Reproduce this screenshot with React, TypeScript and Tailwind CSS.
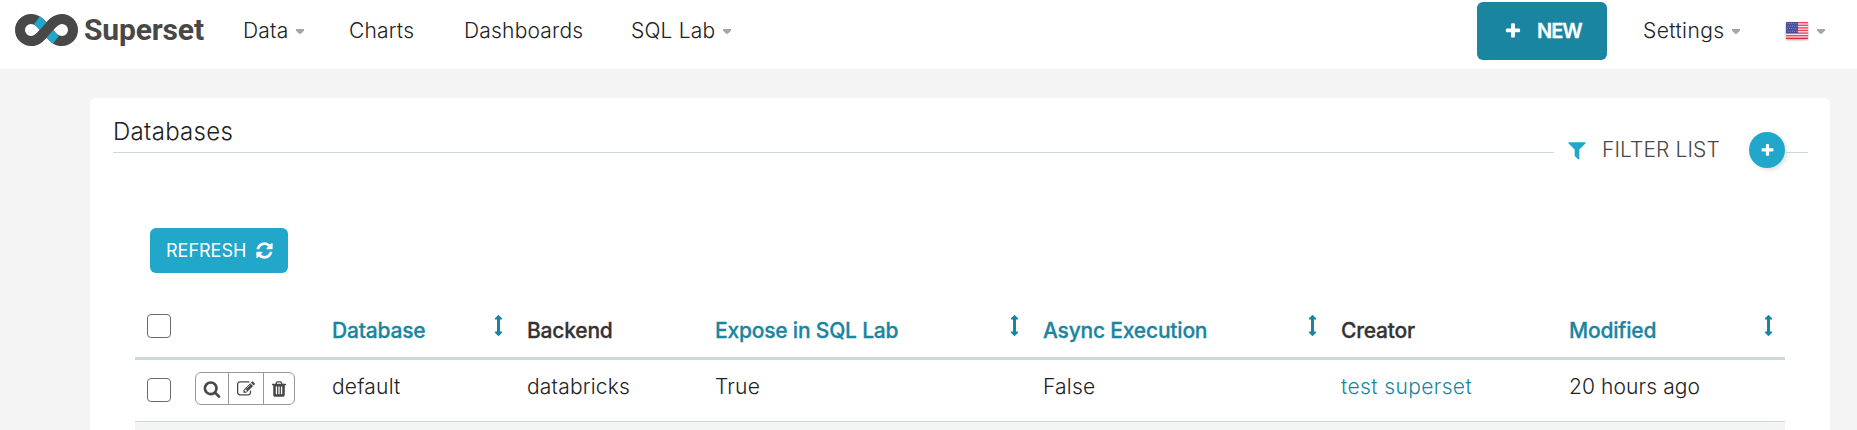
import React from "react";

const paths = {
  search:
    "M1216 832q0-185-131.5-316.5t-316.5-131.5-316.5 131.5-131.5 316.5 131.5 316.5 316.5 131.5 316.5-131.5 131.5-316.5zm512 832q0 52-38 90t-90 38q-54 0-90-38l-343-342q-179 124-399 124-143 0-273.5-55.5t-225-150-150-225-55.5-273.5 55.5-273.5 150-225 225-150 273.5-55.5 273.5 55.5 225 150 150 225 55.5 273.5q0 220-124 399l343 343q37 37 37 90z",
  refresh:
    "M1639 1056q0 5-1 7-64 268-268 434.5t-478 166.5q-146 0-282.5-55t-243.5-157l-129 129q-19 19-45 19t-45-19-19-45v-448q0-26 19-45t45-19h448q26 0 45 19t19 45-19 45l-137 137q71 66 161 102t187 36q134 0 250-65t186-179q11-17 53-117 8-23 30-23h192q13 0 22.5 9.5t9.5 22.5zm25-800v448q0 26-19 45t-45 19h-448q-26 0-45-19t-19-45 19-45l138-138q-148-137-349-137-134 0-250 65t-186 179q-11 17-53 117-8 23-30 23h-199q-13 0-22.5-9.5t-9.5-22.5v-7q65-268 270-434.5t480-166.5q146 0 284 55.5t245 156.5l130-129q19-19 45-19t45 19 19 45z",
  filter:
    "M1595 295q17 41-14 70l-493 493v742q0 42-39 59-13 5-25 5-27 0-45-19l-256-256q-19-19-19-45v-486l-493-493q-31-29-14-70 17-39 59-39h1280q42 0 59 39z",
  plus: "M1600 736v192q0 40-28 68t-68 28h-416v416q0 40-28 68t-68 28h-192q-40 0-68-28t-28-68v-416h-416q-40 0-68-28t-28-68v-192q0-40 28-68t68-28h416v-416q0-40 28-68t68-28h192q40 0 68 28t28 68v416h416q40 0 68 28t28 68z",
  edit: "M888 1184l116-116-152-152-116 116v56h96v96h56zm440-720q-16-16-33 1l-350 350q-17 17-1 33t33-1l350-350q17-17 1-33zm80 594v190q0 119-84.5 203.5t-203.5 84.5h-832q-119 0-203.5-84.5t-84.5-203.5v-832q0-119 84.5-203.5t203.5-84.5h832q63 0 117 25 15 7 18 23 3 17-9 29l-49 49q-14 14-32 8-23-6-45-6h-832q-66 0-113 47t-47 113v832q0 66 47 113t113 47h832q66 0 113-47t47-113v-126q0-13 9-22l64-64q15-15 35-7t20 29zm-96-738l288 288-672 672h-288v-288zm444 132l-92 92-288-288 92-92q28-28 68-28t68 28l152 152q28 28 28 68t-28 68z",
  trash:
    "M704 1376v-704q0-14-9-23t-23-9h-64q-14 0-23 9t-9 23v704q0 14 9 23t23 9h64q14 0 23-9t9-23zm256 0v-704q0-14-9-23t-23-9h-64q-14 0-23 9t-9 23v704q0 14 9 23t23 9h64q14 0 23-9t9-23zm256 0v-704q0-14-9-23t-23-9h-64q-14 0-23 9t-9 23v704q0 14 9 23t23 9h64q14 0 23-9t9-23zm-544-992h448l-48-117q-7-9-17-11h-317q-10 2-17 11zm928 32v64q0 14-9 23t-23 9h-96v948q0 83-47 143.5t-113 60.5h-832q-66 0-113-58.5t-47-141.5v-952h-96q-14 0-23-9t-9-23v-64q0-14 9-23t23-9h309l70-167q15-37 54-63t79-26h320q40 0 79 26t54 63l70 167h309q14 0 23 9t9 23z",
  sort: "M1216 320q0 26-19 45t-45 19h-128v1024h128q26 0 45 19t19 45-19 45l-256 256q-19 19-45 19t-45-19l-256-256q-19-19-19-45t19-45 45-19h128v-1024h-128q-26 0-45-19t-19-45 19-45l256-256q19-19 45-19t45 19l256 256q19 19 19 45z",
};

function Icon({ name, className }: { name: keyof typeof paths; className: string }) {
  return (
    <svg viewBox="0 0 1792 1792" fill="currentColor" className={`shrink-0 ${className}`}>
      <path d={paths[name]} />
    </svg>
  );
}

function Caret({ className = "" }: { className?: string }) {
  return (
    <svg viewBox="0 0 8 5" className={`h-[5px] w-2 shrink-0 fill-[#a6a6a6] ${className}`}>
      <path d="M0 0h8v1.6L5.2 4.6Q4 5.4 2.8 4.6L0 1.6z" />
    </svg>
  );
}

function Logo() {
  return (
    <a className="flex h-[69px] w-[229px] shrink-0 items-start pt-3.5 pl-[15px]">
      <svg viewBox="0 0 63 32" className="h-8 w-[63px] shrink-0" fill="none" strokeWidth="10">
        <path d="M31.500 16C26 9.500 22.500 5 16 5a11 11 0 0 0 0 22C22.500 27 26 22.500 31.500 16S40.500 5 47 5a11 11 0 0 1 0 22C40.500 27 37 22.500 31.500 16z" stroke="#484848" />
        <path d="M22 6.200C25.500 8.800 28 12 31.500 16S37.500 23.300 41 25.800" stroke="#20a7c9" />
        <path d="M21 26C25.500 23.200 28 20 31.500 16S37.500 8.800 42 6" stroke="#484848" />
      </svg>
      <span className="ml-1.5 font-['Roboto',sans-serif] text-[30px] leading-8 font-bold tracking-[-0.15px] text-[#484848]">Superset</span>
    </a>
  );
}

function Flag() {
  const rows = [0, 1, 2, 3, 4, 5, 6];
  return (
    <svg viewBox="0 0 24 20" className="h-5 w-6 shrink-0 drop-shadow-[0_1px_1px_rgba(0,0,0,0.35)]">
      <rect x="1" y="1" width="22" height="17" fill="#f3e9ec" />
      {rows.map((r) => (
        <rect key={r} x="1" y={1 + r * 2.6} width="22" height="1.4" fill={r === 6 ? "#c8323f" : "#f5455c"} />
      ))}
      <rect x="1" y="1" width="12" height="11" fill="#4a4c9b" />
      {rows.slice(0, 4).map((r) =>
        [0, 1, 2, 3, 4].map((c) => (
          <rect key={`${r}-${c}`} x={1.8 + c * 2.2 + (r % 2) * 0.8} y={2.2 + r * 2.5} width="0.9" height="0.9" fill="#a9a9d6" />
        ))
      )}
    </svg>
  );
}

function Th({ children, sortable, last }: { children: React.ReactNode; sortable?: boolean; last?: boolean }) {
  return (
    <div className={`flex justify-between text-[21px] leading-[30px] font-medium ${sortable ? "text-[#1a85a0]" : "text-[#333]"}`}>
      <span className="mt-[28px] tracking-[-0.2px] whitespace-nowrap [-webkit-text-stroke:0.3px_currentColor]">{children}</span>
      {sortable && <Icon name="sort" className={`mt-[27px] size-[21px] ${last ? "mr-1.5" : "mr-[18px]"}`} />}
    </div>
  );
}

const cols = "grid grid-cols-[60px_137px_195px_188px_328px_298px_228px_216px]";
const box = "block size-6 rounded-[4px] border border-[#6b6b6b] bg-white ml-3";

export default function App() {
  return (
    <div className="h-[430px] overflow-hidden bg-[#f4f4f4] font-['Inter',sans-serif] text-[21px] leading-[30px] font-light text-[#222]">
      <header className="flex h-[69px] bg-white">
        <Logo />
        <nav className="flex h-[62px] items-center pl-[14px] tracking-[0.2px] whitespace-nowrap">
          <a className="flex w-[106px] items-center">Data<Caret className="ml-2" /></a>
          <a className="w-[115px]">Charts</a>
          <a className="w-[167px]">Dashboards</a>
          <a className="flex items-center">SQL Lab<Caret className="ml-2" /></a>
        </nav>
        <div className="ml-auto flex h-[62px] items-center whitespace-nowrap">
          <button className="mr-9 flex h-[58px] w-[130px] items-center rounded-[6px] bg-[#1a85a0] pl-[27px] text-[20px] font-semibold text-white">
            <Icon name="plus" className="mr-[15px] size-[18px]" />
            <span className="tracking-[-1px] [-webkit-text-stroke:0.3px_currentColor]">NEW</span>
          </button>
          <a className="flex w-[142px] items-center tracking-[0.4px]">Settings<Caret className="ml-2" /></a>
          <Flag />
          <Caret className="mr-8 ml-2" />
        </div>
      </header>

      <main className="mt-[29px] mr-[27px] ml-[90px] h-[340px] rounded-[6px] bg-white">
        <div className="flex h-[130px] items-start pr-[22px] pl-[23px]">
          <h1 className="h-[55px] flex-1 border-b border-[#cad8dc] pt-[19px] text-[24px] leading-[30px] tracking-[0.3px]">Databases</h1>
          <div className="flex h-[104px] items-center pl-[12px] text-[#484848]">
            <Icon name="filter" className="size-[22px] text-[#20a7c9]" />
            <span className="ml-[14px] w-[147px] tracking-[0.1px] whitespace-nowrap">FILTER LIST</span>
            <button className="flex size-9 items-center justify-center rounded-full bg-[#20a7c9] text-white shadow-[2px_2px_4px_rgba(0,0,0,0.12)]">
              <Icon name="plus" className="size-[15px]" />
            </button>
          </div>
          <div className="h-[55px] w-[23px] border-b border-[#cad8dc]" />
        </div>

        <button className="ml-[60px] flex h-[45px] w-[138px] items-center rounded-[6px] bg-[#20a7c9] pl-[16px] text-[18px] font-normal text-white">
          <span className="w-[89px] text-left">REFRESH</span>
          <Icon name="refresh" className="size-[19px]" />
        </button>

        <div className="mr-[45px] ml-[45px]">
          <div className={`${cols} h-[87px] border-b-[3px] border-[#cad8da] pt-[15px]`}>
            <span className={`${box} mt-[26px]`} />
            <span />
            <Th sortable>Database</Th>
            <Th>Backend</Th>
            <Th sortable>Expose in SQL Lab</Th>
            <Th sortable>Async Execution</Th>
            <Th>Creator</Th>
            <Th sortable last>Modified</Th>
          </div>
          <div className={`${cols} h-[62px] border-b border-[#cad8da] pt-3 tracking-[0.2px] whitespace-nowrap`}>
            <span className={`${box} mt-1.5`} />
            <div className="flex h-[33px] w-[100px] divide-x divide-[#999] rounded-[6px] border border-[#999] text-[#484848]">
              <span className="flex w-[33px] items-center justify-center"><Icon name="search" className="size-[18px]" /></span>
              <span className="flex w-[35px] items-center justify-center"><Icon name="edit" className="size-[18px]" /></span>
              <span className="flex w-[30px] items-center justify-center"><Icon name="trash" className="size-[18px]" /></span>
            </div>
            <span>default</span>
            <span>databricks</span>
            <span>True</span>
            <span>False</span>
            <span className="tracking-[0.38px] text-[#1a85a0]">test superset</span>
            <span className="tracking-[0.1px]">20 hours ago</span>
          </div>
          <div className="h-2 bg-[#f4f4f4]" />
        </div>
      </main>
    </div>
  );
}
